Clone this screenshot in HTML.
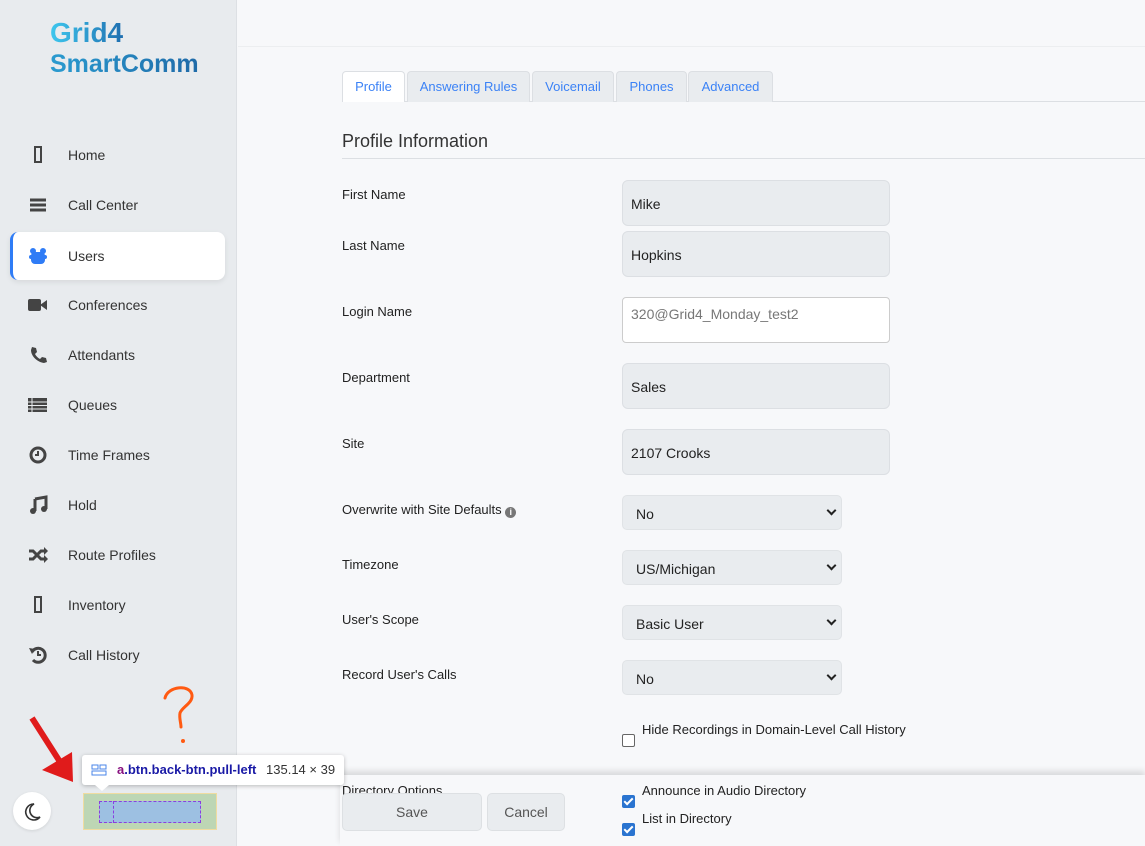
<!DOCTYPE html>
<html><head><meta charset="utf-8"><style>
*{box-sizing:border-box;margin:0;padding:0}
body{width:1145px;height:846px;overflow:hidden;background:#f7f8fa;font-family:"Liberation Sans",Arial,sans-serif;position:relative;color:#222}
.sb{position:absolute;left:0;top:0;width:237px;height:846px;background:#e8ebee;border-right:1px solid #dde0e4}
.logo1{position:absolute;left:50px;top:17px;font-size:28px;font-weight:bold;background:linear-gradient(90deg,#3ec7ee,#1f6fb0);-webkit-background-clip:text;color:transparent}
.logo2{position:absolute;left:50px;top:50px;font-size:25px;font-weight:bold;background:linear-gradient(90deg,#2a9bd0,#1f6aa8);-webkit-background-clip:text;color:transparent}
.nav{position:absolute;left:0;width:237px;height:48px;font-size:14px;color:#333}
.nav span{position:absolute;left:68px;top:16px}
.nav svg{position:absolute;left:28px;top:14px}
.act{left:10px;width:215px;background:#fff;border-radius:8px;border-left:3px solid #2f7cf6;box-shadow:0 2px 6px rgba(0,0,0,.08)}
.act span{left:55px}.act svg{left:15px}
.hdr{position:absolute;left:238px;top:0;right:0;height:47px;border-bottom:1px solid #eceef0}
.tabs{position:absolute;left:342px;top:71px;right:0;height:31px;border-bottom:1px solid #dcdfe3}
.tab{position:absolute;top:0;height:31px;background:#e9ecef;border:1px solid #dcdfe3;border-bottom:none;border-radius:4px 4px 0 0;color:#3b82f6;font-size:13px;text-align:center;line-height:30px}
.h{position:absolute;left:342px;top:131px;font-size:18px;color:#333}
.hr{position:absolute;left:342px;top:158px;right:0;height:1px;background:#dcdfe3}
.lb{position:absolute;left:342px;font-size:13px;color:#222}
.in{position:absolute;left:622px;width:268px;height:46px;background:#e9ecef;border:1px solid #dcdfe3;border-radius:6px;font-size:14px;padding:15px 0 0 8px;color:#222}
.sel{position:absolute;left:622px;width:220px;height:35px;background:#e9ecef;border:1px solid #e0e3e6;border-radius:5px;font-size:14px;padding:10px 0 0 13px}
.sel:after{content:"";position:absolute;right:6px;top:11px;width:5px;height:5px;border-right:2px solid #222;border-bottom:2px solid #222;transform:rotate(45deg)}
.cb{position:absolute;left:622px;width:13px;height:13px;border-radius:2px}
.ck{background:#2a74d0}
.ck:after{content:"";position:absolute;left:4px;top:1px;width:3px;height:7px;border-right:2px solid #fff;border-bottom:2px solid #fff;transform:rotate(45deg)}
.un{border:1px solid #666;background:#fff}
.bar{position:absolute;left:340px;top:775px;right:0;height:71px;background:#f7f8fa;box-shadow:0 -4px 6px rgba(0,0,0,.12)}
.btn{position:absolute;top:793px;height:38px;background:#e9ecef;border:1px solid #dde0e3;border-radius:5px;font-size:14px;color:#555;text-align:center;line-height:36px}
</style></head><body>
<div class="sb">
<div class="logo1">Grid4</div><div class="logo2">SmartComm</div>
<div class="nav" style="top:131px"><svg width="20" height="20"><rect x="7" y="2" width="6" height="15" fill="none" stroke="#444" stroke-width="2"/></svg><span>Home</span></div>
<div class="nav" style="top:181px"><svg width="20" height="20"><path d="M2 5h16M2 10h16M2 15h16" stroke="#444" stroke-width="3"/></svg><span>Call Center</span></div>
<div class="nav act" style="top:232px"><svg width="20" height="20"><circle cx="5" cy="5" r="3" fill="#2f7cf6"/><circle cx="15" cy="5" r="3" fill="#2f7cf6"/><rect x="3" y="6" width="14" height="12" rx="4" fill="#2f7cf6"/><rect x="1" y="9" width="18" height="4" rx="2" fill="#2f7cf6"/></svg><span>Users</span></div>
<div class="nav" style="top:281px"><svg width="20" height="20"><rect x="0" y="4" width="13" height="12" rx="2" fill="#444"/><path d="M12 10l7-5v10z" fill="#444"/></svg><span>Conferences</span></div>
<div class="nav" style="top:331px"><svg width="20" height="20"><path d="M4 2l4 1 1 4-2 2c1 2 3 4 5 5l2-2 4 1 1 4-3 1C9 17 3 11 3 5z" fill="#444"/></svg><span>Attendants</span></div>
<div class="nav" style="top:381px"><svg width="20" height="20"><rect x="0" y="3" width="19" height="14" fill="#444"/><path d="M0 7h19M0 10.5h19M0 14h19M4 3v14" stroke="#e8ebee" stroke-width="1"/></svg><span>Queues</span></div>
<div class="nav" style="top:431px"><svg width="20" height="20"><circle cx="10" cy="10" r="7" fill="none" stroke="#444" stroke-width="3"/><path d="M10 6v4h-3" stroke="#444" stroke-width="2" fill="none"/></svg><span>Time Frames</span></div>
<div class="nav" style="top:481px"><svg width="20" height="20"><path d="M7 4l11-2v12" stroke="#444" stroke-width="3" fill="none"/><path d="M7 4v12" stroke="#444" stroke-width="3"/><circle cx="5" cy="16" r="3" fill="#444"/><circle cx="16" cy="14" r="3" fill="#444"/></svg><span>Hold</span></div>
<div class="nav" style="top:531px"><svg width="20" height="20"><path d="M1 6h4l8 8h4M1 14h4l8-8h4" stroke="#444" stroke-width="3" fill="none"/><path d="M16 2l4 4-4 4zM16 10l4 4-4 4z" fill="#444"/></svg><span>Route Profiles</span></div>
<div class="nav" style="top:581px"><svg width="20" height="20"><rect x="7" y="2" width="6" height="15" fill="none" stroke="#444" stroke-width="2"/></svg><span>Inventory</span></div>
<div class="nav" style="top:631px"><svg width="20" height="20"><path d="M4 7A7 7 0 1 1 5 15" stroke="#444" stroke-width="3" fill="none"/><path d="M1 3l6 1-3 5z" fill="#444"/><path d="M10 6v4h3" stroke="#444" stroke-width="2" fill="none"/></svg><span>Call History</span></div>
<div style="position:absolute;left:13px;top:792px;width:38px;height:38px;border-radius:50%;background:#fff;box-shadow:0 1px 3px rgba(0,0,0,.1)"><svg width="38" height="38"><path d="M21 12a8 8 0 1 0 6 13a7 7 0 0 1-6-13z" fill="none" stroke="#333" stroke-width="1.6"/></svg></div>
</div>
<div class="hdr"></div>
<div class="tabs">
<div class="tab" style="left:0;width:63px;background:#fff">Profile</div>
<div class="tab" style="left:65px;width:123px">Answering Rules</div>
<div class="tab" style="left:190px;width:82px">Voicemail</div>
<div class="tab" style="left:274px;width:71px">Phones</div>
<div class="tab" style="left:346px;width:85px">Advanced</div>
</div>
<div class="h">Profile Information</div><div class="hr"></div>
<div class="lb" style="top:187px">First Name</div><div class="in" style="top:180px">Mike</div>
<div class="lb" style="top:238px">Last Name</div><div class="in" style="top:231px">Hopkins</div>
<div class="lb" style="top:304px">Login Name</div><div class="in" style="top:297px;background:#fff;color:#777;padding-top:8px;border-color:#ccc;border-radius:4px">320@Grid4_Monday_test2</div>
<div class="lb" style="top:370px">Department</div><div class="in" style="top:363px">Sales</div>
<div class="lb" style="top:436px">Site</div><div class="in" style="top:429px">2107 Crooks</div>
<div class="lb" style="top:502px">Overwrite with Site Defaults <span style="display:inline-block;width:11px;height:11px;border-radius:50%;background:#777;color:#fff;font-size:9px;text-align:center;line-height:11px;font-weight:bold;vertical-align:-1px">i</span></div><div class="sel" style="top:495px">No</div>
<div class="lb" style="top:557px">Timezone</div><div class="sel" style="top:550px">US/Michigan</div>
<div class="lb" style="top:612px">User's Scope</div><div class="sel" style="top:605px">Basic User</div>
<div class="lb" style="top:667px">Record User's Calls</div><div class="sel" style="top:660px">No</div>
<div class="cb un" style="top:734px"></div><div class="lb" style="left:642px;top:722px">Hide Recordings in Domain-Level Call History</div>
<div class="bar"></div>
<div class="lb" style="top:783px;height:12px;overflow:hidden">Directory Options</div>
<div class="btn" style="left:342px;width:140px">Save</div>
<div class="btn" style="left:487px;width:78px">Cancel</div>
<div class="cb ck" style="top:795px"></div><div class="lb" style="left:642px;top:783px">Announce in Audio Directory</div>
<div class="cb ck" style="top:823px"></div><div class="lb" style="left:642px;top:811px">List in Directory</div>
<div style="position:absolute;left:83px;top:793px;width:134px;height:37px;background:#bdd6b4;border:1px solid #f0dca0"><div style="position:absolute;left:15px;top:7px;width:102px;height:22px;background:#9dc0e2;border:1px dashed #8a3ee0"></div><div style="position:absolute;left:15px;top:7px;width:15px;height:22px;border-right:1px dashed #8a3ee0"></div></div>
<div style="position:absolute;left:82px;top:755px;width:262px;height:30px;background:#fff;border-radius:3px;box-shadow:0 1px 4px rgba(0,0,0,.25);font-size:13px;line-height:30px;padding-left:35px;white-space:nowrap"><svg style="position:absolute;left:9px;top:9px" width="16" height="12"><rect x="1" y="1" width="6" height="4" fill="none" stroke="#4a86e8"/><rect x="9" y="1" width="6" height="4" fill="none" stroke="#4a86e8"/><rect x="1" y="7" width="14" height="4" fill="none" stroke="#4a86e8"/></svg><b style="color:#881280">a</b><b style="color:#1a1aa6">.btn.back-btn.pull-left</b> <span style="color:#333;margin-left:6px">135.14 × 39</span></div>
<div style="position:absolute;left:95px;top:785px;width:0;height:0;border-left:7px solid transparent;border-right:7px solid transparent;border-top:6px solid #fff"></div>
<svg style="position:absolute;left:0;top:670px" width="240" height="130"><path d="M32 48L62 95" stroke="#e01b1b" stroke-width="6"/><path d="M42 100L72 82L73 112z" fill="#e01b1b"/><path d="M165 28c3-12 25-14 27-3c1 8-10 12-12 18c-1 5 1 10 1 14" stroke="#ff5a12" stroke-width="3" fill="none" stroke-linecap="round"/><circle cx="183" cy="71" r="2" fill="#ff5a12"/></svg>
</body></html>
